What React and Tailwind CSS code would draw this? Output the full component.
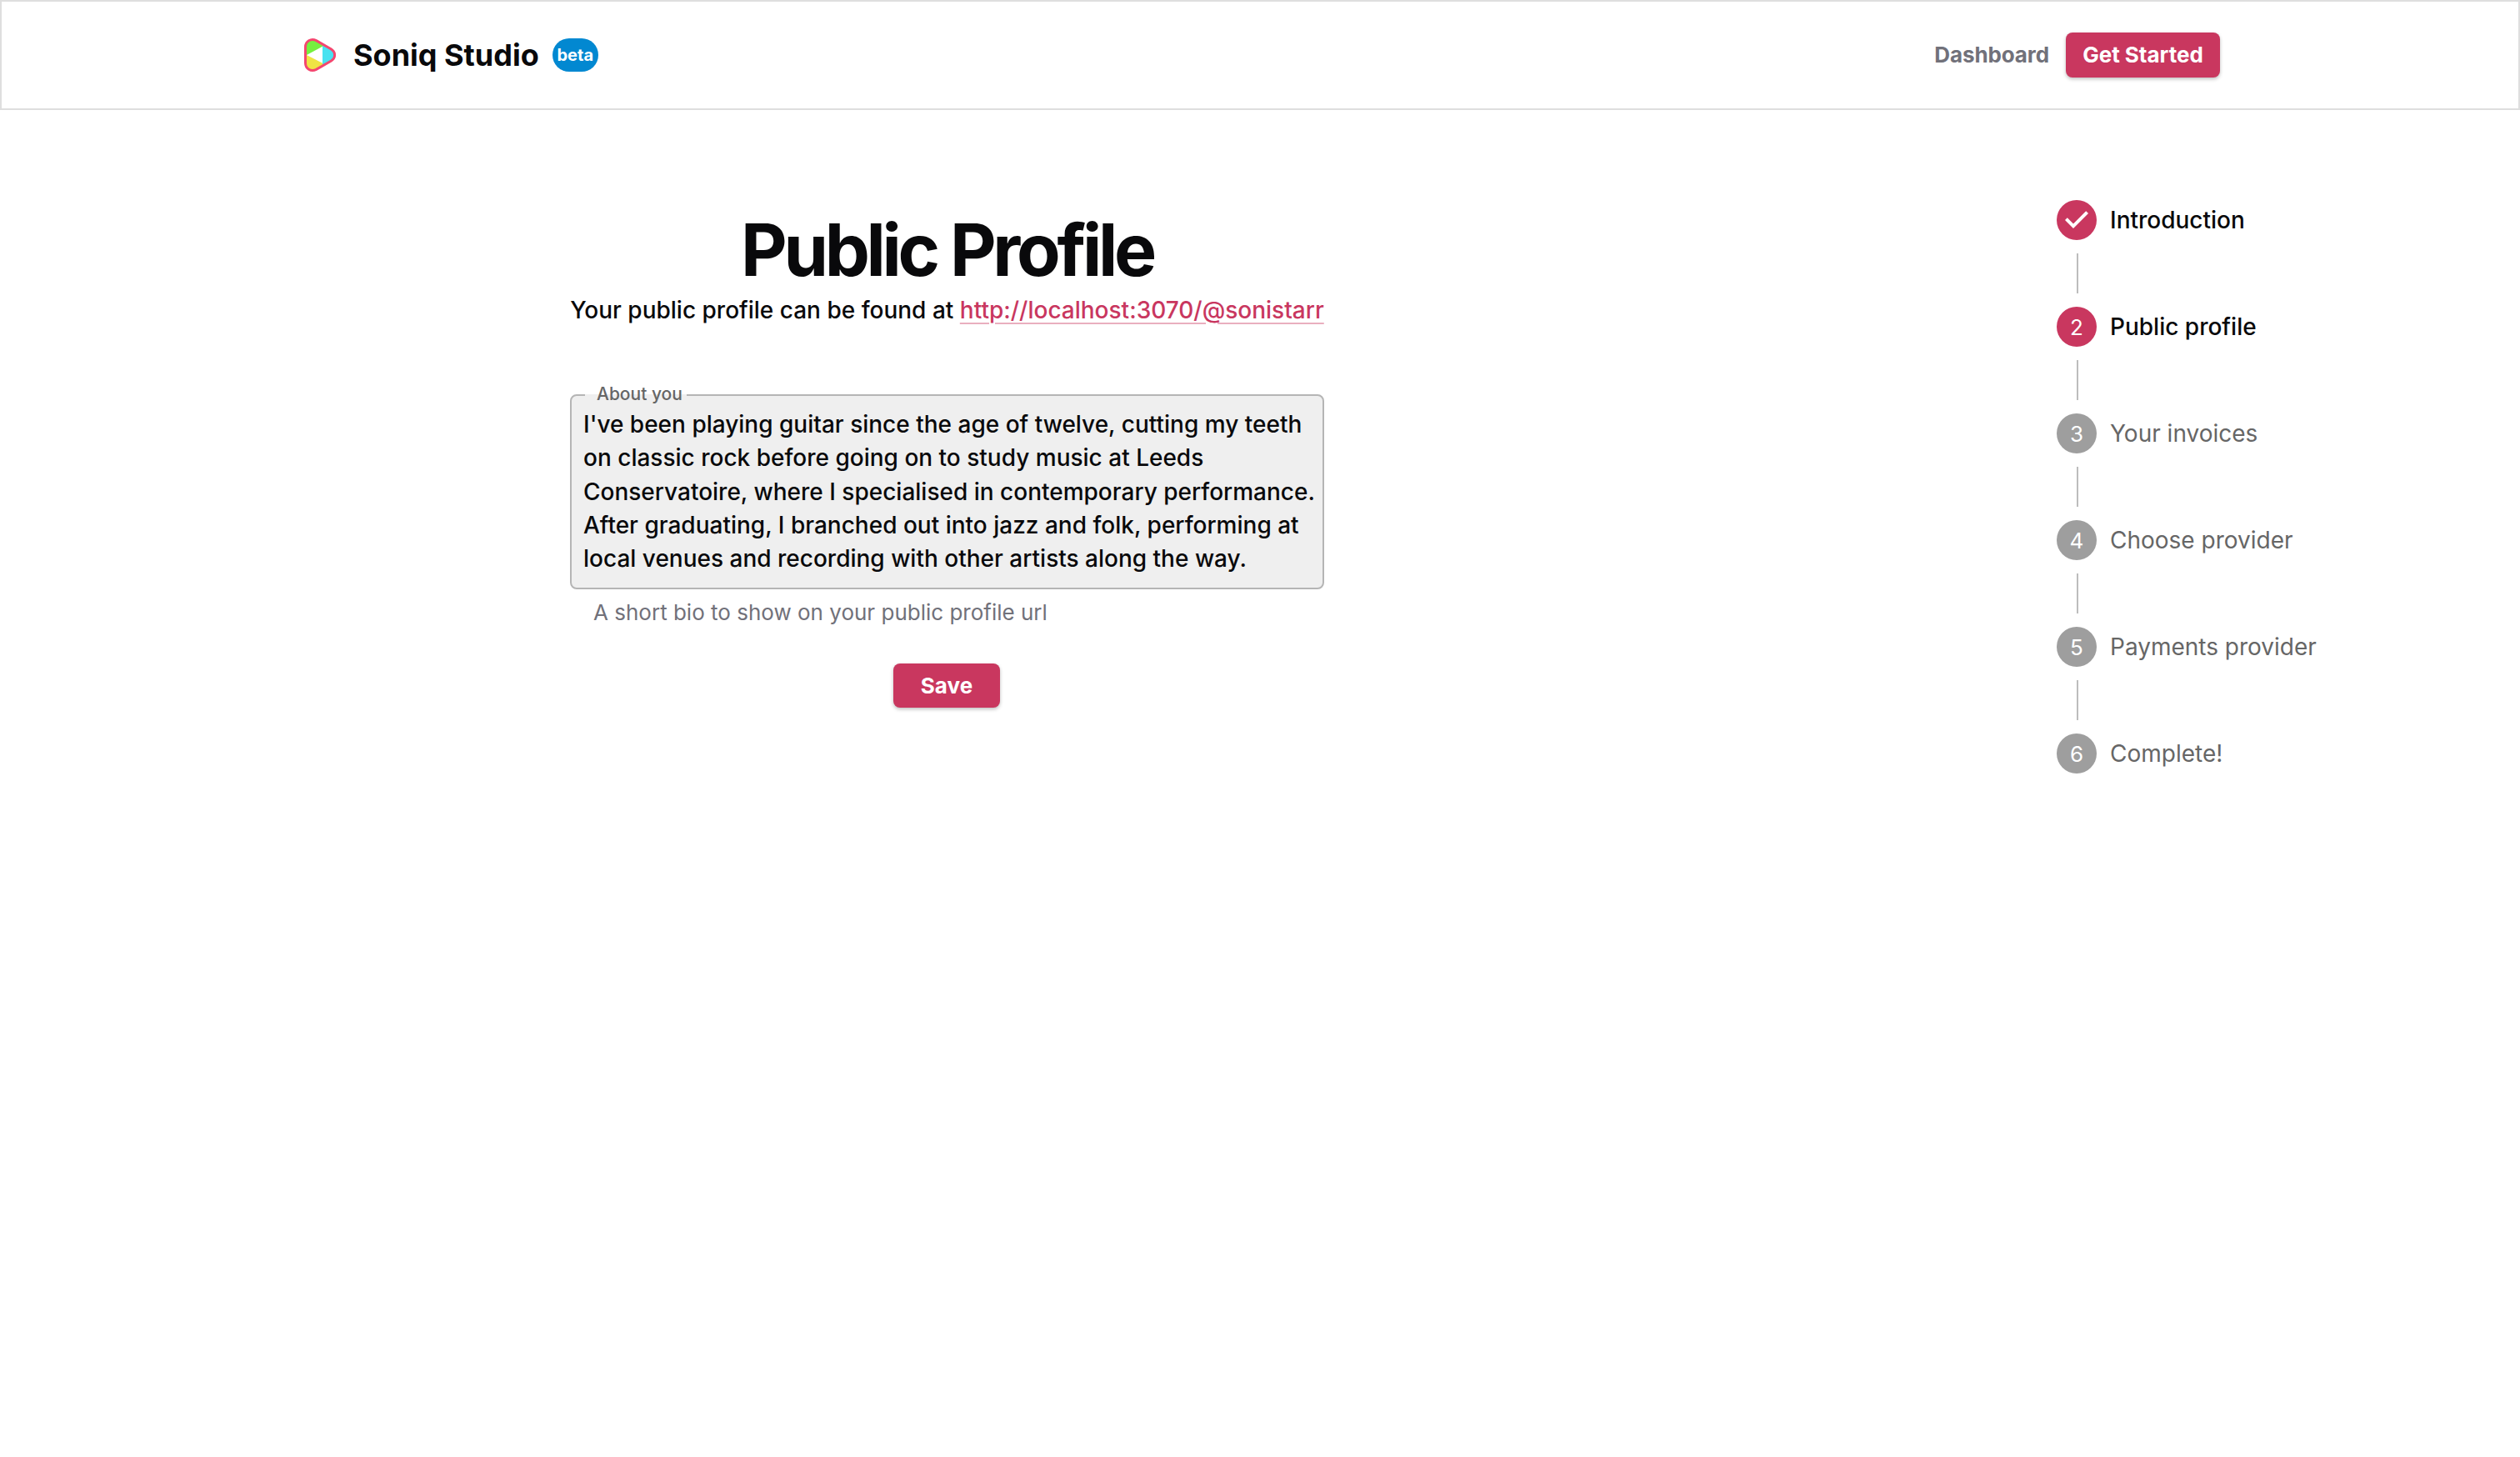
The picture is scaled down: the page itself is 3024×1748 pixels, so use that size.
import { useState } from "react";

const steps = [
  "Introduction",
  "Public profile",
  "Your invoices",
  "Choose provider",
  "Payments provider",
  "Complete!",
];

const bio =
  "I've been playing guitar since the age of twelve, cutting my teeth on classic rock before going on to study music at Leeds Conservatoire, where I specialised in contemporary performance. After graduating, I branched out into jazz and folk, performing at local venues and recording with other artists along the way.";

function Logo() {
  return (
    <svg viewBox="0 0 38 40" className="w-[38px] h-10">
      <defs>
        <clipPath id="logo-shape">
          <path d="M1.5 10.5 C1.5 3.5 8 -0.3 14.5 2.6 L32.5 13 C38 16.5 38 23.5 32.5 27 L14.5 37.4 C8 40.3 1.5 36.5 1.5 29.5 Z" />
        </clipPath>
      </defs>
      <g clipPath="url(#logo-shape)">
        <rect width="38" height="40" fill="#fff" />
        <path d="M0 0 H22 V9.8 L3 20 H0 Z" fill="#76f03f" />
        <path d="M0 20 H3 L22 29.7 V40 H0 Z" fill="#efe444" />
        <path d="M22 9.8 V0 H38 V40 H22 Z" fill="#48e2f0" />
      </g>
      <path
        d="M1.5 10.5 C1.5 3.5 8 -0.3 14.5 2.6 L32.5 13 C38 16.5 38 23.5 32.5 27 L14.5 37.4 C8 40.3 1.5 36.5 1.5 29.5 Z"
        fill="none"
        stroke="#f4476f"
        strokeWidth="3"
      />
    </svg>
  );
}

function Header() {
  return (
    <header className="h-[132px] border-2 border-[#dedede] flex items-center justify-between pl-[363px] pr-[358px]">
      <div className="flex items-center">
        <Logo />
        <span className="ml-[21px] text-[36px] leading-10 font-bold whitespace-nowrap">
          Soniq Studio
        </span>
        <span className="ml-4 w-[55px] h-10 rounded-[20px] bg-[#0288d1] text-white text-[20px] font-bold flex items-center justify-center">
          beta
        </span>
      </div>
      <nav className="flex items-center gap-[20px]">
        <a href="#" className="text-[26px] leading-10 font-bold tracking-[-0.1px] text-[#71717a]">
          Dashboard
        </a>
        <button className="w-[185px] h-[54px] rounded-lg bg-[#c9375f] text-white text-[26px] leading-10 font-bold whitespace-nowrap shadow-[0_2px_4px_rgba(0,0,0,0.25)]">
          Get Started
        </button>
      </nav>
    </header>
  );
}

function Step({ label, index, active }) {
  const done = index < active;
  const on = index <= active;
  return (
    <>
      {index > 0 && <div className="ml-6 my-4 w-0.5 h-12 bg-[#bdbdbd]" />}
      <div className="flex items-center gap-4 h-12">
        <div
          className={`w-12 h-12 shrink-0 rounded-full flex items-center justify-center text-white text-[26px] leading-10 pt-0.5 ${
            on ? "bg-[#c9375f]" : "bg-[#9e9e9e]"
          }`}
        >
          {done ? (
            <svg viewBox="0 0 24 24" className="w-12 h-12 -mt-0.5">
              <path
                d="M10 17l-5-5 1.4-1.4 3.6 3.6 7.6-7.6L19 8l-9 9z"
                fill="#fff"
              />
            </svg>
          ) : (
            index + 1
          )}
        </div>
        <span
          className={`text-[28px] leading-10 whitespace-nowrap ${
            on ? "font-medium text-[#09090b]" : "text-[#666666]"
          }`}
        >
          {label}
        </span>
      </div>
    </>
  );
}

export default function App() {
  const [about, setAbout] = useState(bio);

  return (
    <div className="min-h-screen bg-white text-[#09090b] font-['Inter',sans-serif]">
      <Header />
      <main className="flex justify-between pl-[684px] pr-[244px]">
        <div className="w-[905px] pt-[122px] flex flex-col items-center">
          <h1 className="text-[86px] leading-[92px] font-bold tracking-[-4.3px] whitespace-nowrap">
            Public Profile
          </h1>
          <p className="mt-[6px] text-[28px] leading-10 font-medium whitespace-nowrap">
            Your public profile can be found at{" "}
            <a
              href="#"
              className="text-[#c9375f] underline decoration-[#e9afbf] decoration-2 underline-offset-[5px]"
            >
              http://localhost:3070/@sonistarr
            </a>
          </p>
          <div className="relative mt-[81px] w-full h-[234px] rounded-lg border-2 border-[#b5b5b5] bg-[#efefef] px-[14px] pt-[14px]">
            <div className="absolute -top-0.5 left-4 w-[122px] h-0.5 bg-[#efefef]" />
            <label
              htmlFor="about"
              className="absolute -top-[17px] left-[30px] text-[21px] leading-[30px] font-medium text-[#666666]"
            >
              About you
            </label>
            <textarea
              id="about"
              value={about}
              onChange={(e) => setAbout(e.target.value)}
              className="block w-[883px] h-[202px] resize-none overflow-hidden bg-transparent outline-none text-[28px] leading-[40.25px] font-medium"
            />
          </div>
          <p className="mt-[8px] self-start ml-7 text-[26px] leading-10 text-[#71717a]">
            A short bio to show on your public profile url
          </p>
          <button className="mt-[41px] mr-px w-32 h-[53px] rounded-lg bg-[#c9375f] text-white text-[26px] font-bold shadow-[0_2px_4px_rgba(0,0,0,0.25)]">
            Save
          </button>
        </div>
        <div className="w-[312px] pt-[108px]">
          {steps.map((label, i) => (
            <Step key={label} label={label} index={i} active={1} />
          ))}
        </div>
      </main>
    </div>
  );
}
